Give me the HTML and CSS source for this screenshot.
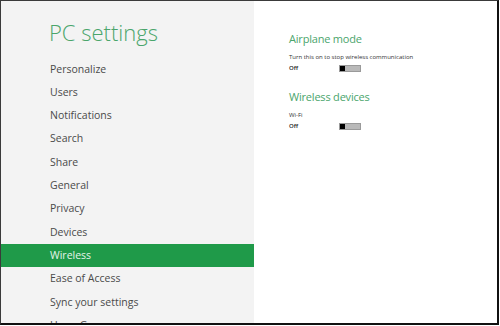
FILE: index.html
```html
<!DOCTYPE html>
<html lang="en">
<head>
  <meta charset="UTF-8">
  <title>PC settings</title>
  <link rel="stylesheet" href="styles.css">
</head>
<body>
  <div class="frame">
    <div class="nav">
      <h1>PC settings</h1>
      <ul class="menu">
        <li>Personalize</li>
        <li>Users</li>
        <li>Notifications</li>
        <li>Search</li>
        <li>Share</li>
        <li>General</li>
        <li>Privacy</li>
        <li>Devices</li>
        <li class="active">Wireless</li>
        <li>Ease of Access</li>
        <li>Sync your settings</li>
        <li>HomeGroup</li>
      </ul>
    </div>

    <div class="content">
      <div class="section">
        <h2>Airplane mode</h2>
        <div class="label">Turn this on to stop wireless communication</div>
        <div class="setting">
          <span class="state">Off</span>
          <span class="toggle"><span class="thumb"></span></span>
        </div>
      </div>
      <div class="section">
        <h2>Wireless devices</h2>
        <div class="label">Wi-Fi</div>
        <div class="setting">
          <span class="state">Off</span>
          <span class="toggle"><span class="thumb"></span></span>
        </div>
      </div>
    </div>
  </div>
</body>
</html>
```

FILE: styles.css
```css
* {
  margin: 0;
  padding: 0;
  box-sizing: border-box;
  font-family: 'Open Sans', 'Noto Sans', sans-serif;
}
body {
  background: #ffffff;
  width: 500px;
  height: 326px;
  overflow: hidden;
}
.frame {
  display: flex;
  width: 499px;
  height: 325px;
  border-top: 1px solid #3a3a3a;
  border-left: 1px solid #3a3a3a;
  border-right: 2px solid #111;
  border-bottom: 2px solid #111;
  overflow: hidden;
}
.nav {
  width: 253px;
  flex-shrink: 0;
  background: #f3f3f3;
}
h1 {
  font-size: 22px;
  font-weight: 300;
  color: #4aa56b;
  padding-left: 48px;
  padding-top: 16px;
  height: 56.5px;
}
.menu {
  list-style: none;
}
.menu li {
  height: 23.33px;
  line-height: 23.33px;
  padding-left: 49px;
  font-size: 10.5px;
  color: #4a4a4a;
}
.menu li.active {
  background: #1f9a49;
  color: #e6f4ea;
}
.content {
  flex: 1;
  background: #ffffff;
  padding-left: 35px;
  padding-top: 29px;
}
.section {
  margin-bottom: 14px;
}
h2 {
  font-size: 11px;
  font-weight: 400;
  color: #4aa56c;
  line-height: 18px;
  margin-bottom: 5px;
  letter-spacing: -0.2px;
}
.label {
  font-size: 6px;
  color: #333;
  line-height: 9px;
}
.setting {
  display: flex;
  align-items: center;
  height: 12px;
}
.state {
  width: 50px;
  font-size: 6px;
  font-weight: 600;
  color: #222;
}
.toggle {
  display: flex;
  width: 22px;
  height: 7px;
  background: #b9b9b9;
  border: 1px solid #9a9a9a;
}
.thumb {
  width: 5px;
  height: 100%;
  background: #000;
}
```
